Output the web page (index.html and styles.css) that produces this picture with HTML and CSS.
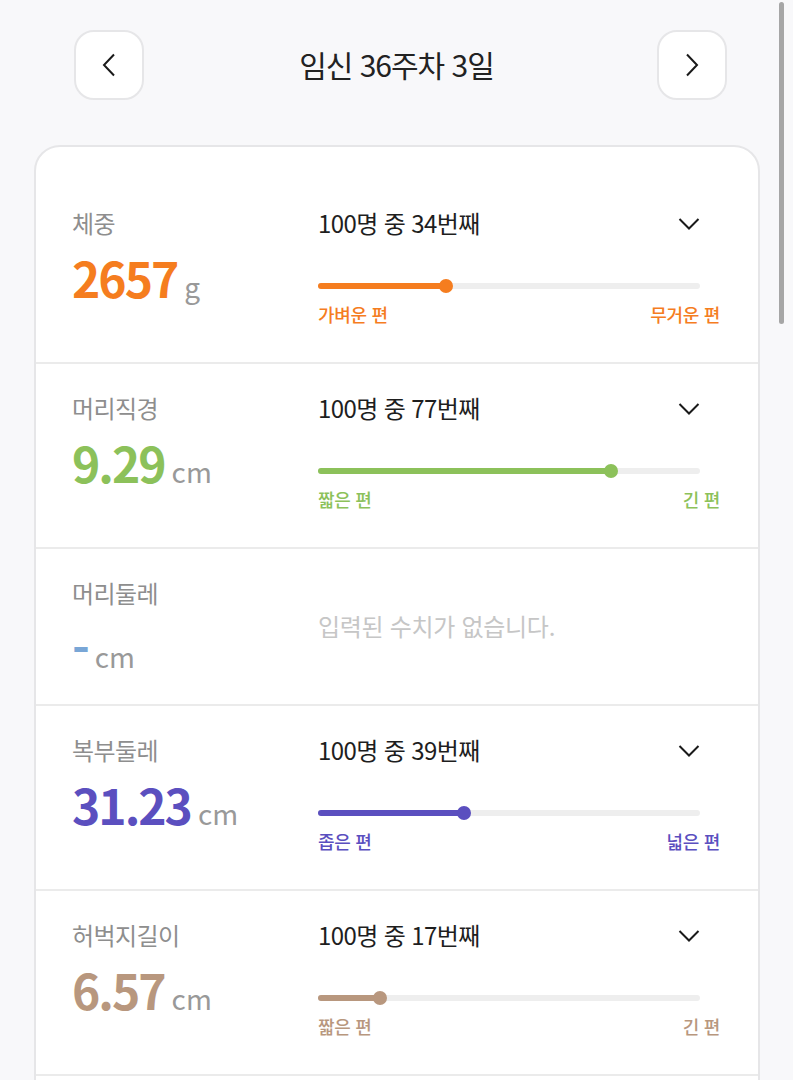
FILE: index.html
```html
<!DOCTYPE html>
<html lang="ko">
<head>
  <meta charset="UTF-8">
  <meta name="viewport" content="width=device-width, initial-scale=1.0">
  <title>태아 성장</title>
  <link rel="stylesheet" href="styles.css">
</head>
<body>

  <div class="page">
    <div class="header">
      <button class="nav-btn" aria-label="이전">
        <svg width="14" height="24" viewBox="0 0 14 24"><path d="M12 1.5 L2 12 L12 22.5" fill="none" stroke="#1a1a1a" stroke-width="2"/></svg>
      </button>
      <h1 class="title">임신 36주차 3일</h1>
      <button class="nav-btn" aria-label="다음">
        <svg width="14" height="24" viewBox="0 0 14 24"><path d="M2 1.5 L12 12 L2 22.5" fill="none" stroke="#1a1a1a" stroke-width="2"/></svg>
      </button>
    </div>

    <div class="card">

      <div class="row">
        <div class="left">
          <div class="label">체중</div>
          <div class="value"><span class="num orange">2657</span><span class="unit">g</span></div>
        </div>
        <div class="right">
          <div class="rank">
            <span>100명 중 34번째</span>
            <svg class="chev" width="22" height="14" viewBox="0 0 22 14"><path d="M1.5 2 L11 11.5 L20.5 2" fill="none" stroke="#1a1a1a" stroke-width="2"/></svg>
          </div>
          <div class="track"><div class="fill bg-orange" style="width: 33.6%"></div></div>
          <div class="ends orange"><span>가벼운 편</span><span>무거운 편</span></div>
        </div>
      </div>

      <div class="row">
        <div class="left">
          <div class="label">머리직경</div>
          <div class="value"><span class="num green">9.29</span><span class="unit">cm</span></div>
        </div>
        <div class="right">
          <div class="rank">
            <span>100명 중 77번째</span>
            <svg class="chev" width="22" height="14" viewBox="0 0 22 14"><path d="M1.5 2 L11 11.5 L20.5 2" fill="none" stroke="#1a1a1a" stroke-width="2"/></svg>
          </div>
          <div class="track"><div class="fill bg-green" style="width: 76.6%"></div></div>
          <div class="ends green"><span>짧은 편</span><span>긴 편</span></div>
        </div>
      </div>

      <div class="row">
        <div class="left">
          <div class="label">머리둘레</div>
          <div class="value"><span class="num blue">-</span><span class="unit">cm</span></div>
        </div>
        <div class="right empty">
          <div class="no-data">입력된 수치가 없습니다.</div>
        </div>
      </div>

      <div class="row">
        <div class="left">
          <div class="label">복부둘레</div>
          <div class="value"><span class="num purple">31.23</span><span class="unit">cm</span></div>
        </div>
        <div class="right">
          <div class="rank">
            <span>100명 중 39번째</span>
            <svg class="chev" width="22" height="14" viewBox="0 0 22 14"><path d="M1.5 2 L11 11.5 L20.5 2" fill="none" stroke="#1a1a1a" stroke-width="2"/></svg>
          </div>
          <div class="track"><div class="fill bg-purple" style="width: 38.3%"></div></div>
          <div class="ends purple"><span>좁은 편</span><span>넓은 편</span></div>
        </div>
      </div>

      <div class="row">
        <div class="left">
          <div class="label">허벅지길이</div>
          <div class="value"><span class="num brown">6.57</span><span class="unit">cm</span></div>
        </div>
        <div class="right">
          <div class="rank">
            <span>100명 중 17번째</span>
            <svg class="chev" width="22" height="14" viewBox="0 0 22 14"><path d="M1.5 2 L11 11.5 L20.5 2" fill="none" stroke="#1a1a1a" stroke-width="2"/></svg>
          </div>
          <div class="track"><div class="fill bg-brown" style="width: 16.3%"></div></div>
          <div class="ends brown"><span>짧은 편</span><span>긴 편</span></div>
        </div>
      </div>

    </div>
  </div>

  <div class="scrollbar"></div>

</body>
</html>
```

FILE: styles.css
```css
* {
  margin: 0;
  padding: 0;
  box-sizing: border-box;
}

body {
  font-family: "Noto Sans CJK KR", "Noto Sans", sans-serif;
  background-color: #f8f8fa;
  color: #222222;
  overflow: hidden;
}

.page {
  padding: 30px 33px 0 34px;
}

/* header */
.header {
  display: flex;
  align-items: center;
  justify-content: space-between;
  padding: 0 33px 0 40px;
  height: 70px;
}

.nav-btn {
  width: 70px;
  height: 70px;
  border: 2px solid #e6e6e8;
  border-radius: 20px;
  background-color: #ffffff;
  display: flex;
  align-items: center;
  justify-content: center;
}

.title {
  font-size: 30px;
  font-weight: 400;
  line-height: 40px;
  letter-spacing: -1px;
  color: #222222;
  margin: -2px 0 0 -8px;
}

/* card */
.card {
  margin-top: 45px;
  background-color: #ffffff;
  border: 2px solid #e6e6e8;
  border-radius: 26px;
  padding: 32px 0 60px;
}

.row {
  display: grid;
  grid-template-columns: 246px 1fr;
  padding: 27px 38px 21px 36px;
  border-bottom: 2px solid #ebebeb;
}

.label {
  font-size: 24px;
  line-height: 34px;
  color: #8e8e8e;
  letter-spacing: -0.6px;
}

.value {
  margin-top: 9px;
  height: 64px;
  display: flex;
  align-items: baseline;
}

.num {
  font-size: 48px;
  line-height: 56px;
  font-weight: 700;
  letter-spacing: -2px;
}

.unit {
  font-size: 28px;
  color: #999999;
  margin-left: 7px;
}

.right {
  padding-bottom: 14px;
}

.right.empty {
  display: flex;
  align-items: center;
  padding-bottom: 0;
}

.rank {
  display: flex;
  align-items: center;
  justify-content: space-between;
  font-size: 24px;
  line-height: 34px;
  letter-spacing: -0.6px;
  color: #1e1e1e;
  padding-right: 20px;
}

.chev {
  margin-top: 2px;
}

.track {
  position: relative;
  margin: 43px 20px 0 0;
  height: 6px;
  border-radius: 3px;
  background-color: #eeeeee;
}

.fill {
  height: 6px;
  border-radius: 3px;
  position: relative;
}

.fill::after {
  content: "";
  position: absolute;
  right: -7px;
  top: -4px;
  width: 14px;
  height: 14px;
  border-radius: 50%;
  background-color: inherit;
}

.ends {
  display: flex;
  justify-content: space-between;
  margin-top: 12px;
  font-size: 18px;
  line-height: 26px;
  font-weight: 500;
  letter-spacing: -0.3px;
}

.no-data {
  font-size: 24px;
  color: #c6c6c6;
  letter-spacing: -0.3px;
  margin-top: -8px;
}

.orange { color: #f57d1f; }
.green { color: #8cc15a; }
.blue { color: #79a6d6; }
.purple { color: #5b4fbf; }
.brown { color: #b8977e; }

.bg-orange { background-color: #f57d1f; }
.bg-green { background-color: #8cc15a; }
.bg-purple { background-color: #5b4fbf; }
.bg-brown { background-color: #b8977e; }

.scrollbar {
  position: fixed;
  top: 2px;
  right: 9px;
  width: 5px;
  height: 322px;
  border-radius: 3px;
  background-color: #a6a6a6;
}
```
